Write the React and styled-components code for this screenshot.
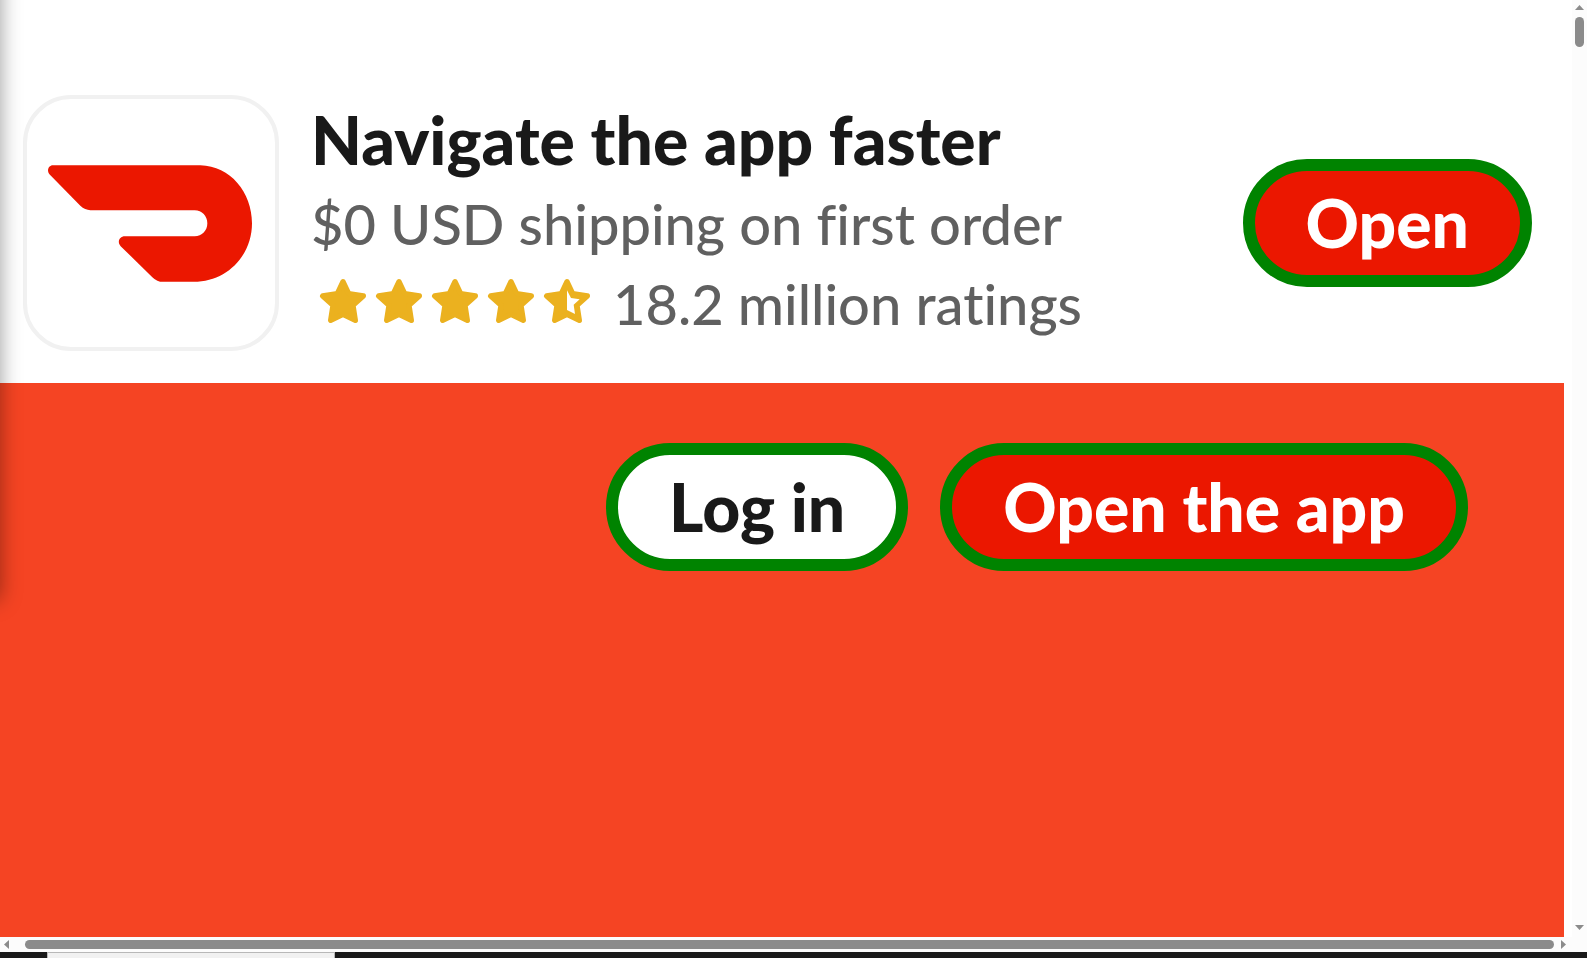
import React from "react";
import styled, { createGlobalStyle } from "styled-components";

const GlobalStyle = createGlobalStyle`
  * { box-sizing: border-box; }
  body {
    margin: 0;
    background: #ffffff;
    font-family: Lato, "Liberation Sans", sans-serif;
    font-variant-ligatures: none;
    overflow: hidden;
  }
`;

const Window = styled.div`
  position: relative;
  display: flex;
  flex-direction: column;
  height: 100vh;
  overflow: hidden;
`;

const Viewport = styled.div`
  flex: 1;
  display: flex;
  min-height: 0;
`;

const Page = styled.div`
  flex: 1;
  display: flex;
  flex-direction: column;
  padding-right: 8px;
  min-width: 0;
`;

const Banner = styled.header`
  display: flex;
  align-items: center;
  gap: 32px;
  padding: 95px 32px 32px 23px;
`;

const AppIcon = styled.div`
  flex: none;
  display: grid;
  place-items: center;
  width: 256px;
  height: 256px;
  padding-right: 2px;
  border: 4px solid #f1f1f1;
  border-radius: 48px;
`;

const BannerText = styled.div`
  flex: 1;
  min-width: 0;
  white-space: nowrap;
`;

const Title = styled.h1`
  margin: 0 0 6px;
  font-size: 66px;
  font-weight: 900;
  line-height: 76px;
  color: #191919;
`;

const Detail = styled.p`
  display: flex;
  align-items: center;
  gap: 18px;
  margin: 0;
  font-size: 56px;
  font-weight: 500;
  line-height: 80px;
  color: #606060;
`;

const Stars = styled.span`
  display: flex;
  padding: 0 0 6px 4px;
`;

const PillButton = styled.button`
  flex: none;
  height: 128px;
  padding: 0 51px;
  border: 12px solid #008300;
  border-radius: 64px;
  background: ${(p) => (p.$light ? "#ffffff" : "#eb1700")};
  color: ${(p) => (p.$light ? "#191919" : "#ffffff")};
  font: inherit;
  font-size: 66px;
  font-weight: 900;
  line-height: 80px;
  white-space: nowrap;
  cursor: pointer;
`;

const Hero = styled.main`
  flex: 1;
  display: flex;
  justify-content: flex-end;
  align-items: flex-start;
  gap: 32px;
  padding: 60px 96px 0;
  background: #f54423;
`;

const DrawerShadow = styled.div`
  position: absolute;
  top: -40px;
  left: -100px;
  width: 100px;
  height: 640px;
  box-shadow: 0 0 20px rgba(0, 0, 0, 0.4);
`;

const ScrollBar = styled.div`
  flex: none;
  display: flex;
  align-items: center;
  flex-direction: ${(p) => (p.$vertical ? "column" : "row")};
  width: ${(p) => (p.$vertical ? "15px" : "auto")};
  height: ${(p) => (p.$vertical ? "auto" : "15px")};
  padding: ${(p) => (p.$vertical ? "5px 0 7px" : "0 21px 0 4px")};
  background: #fcfcfc;
`;

const Track = styled.div`
  flex: 1;
  padding: ${(p) => (p.$vertical ? "7px 0" : "0 7px 0 16px")};
`;

const Thumb = styled.div`
  width: ${(p) => (p.$vertical ? "9px" : "100%")};
  height: ${(p) => (p.$vertical ? "30px" : "9px")};
  border-radius: 5px;
  background: #8b8b8b;
`;

const Footer = styled.footer`
  flex: none;
  height: 6px;
  padding-left: 47px;
  background: #191919;
`;

const FooterTab = styled.div`
  width: 288px;
  height: 100%;
  border: 1px solid #b8b8b8;
  border-bottom: 0;
  background: #f1f1f1;
`;

const arrows = {
  up: ["0,5 9,5 4.5,0", 9, 5],
  down: ["0,0 9,0 4.5,5", 9, 5],
  left: ["5,0 5,9 0,4.5", 5, 9],
  right: ["0,0 0,9 5,4.5", 5, 9],
};

function Arrow({ to }) {
  const [points, w, h] = arrows[to];
  return (
    <svg width={w} height={h} viewBox={`0 0 ${w} ${h}`} aria-hidden="true">
      <polygon points={points} fill="#8b8b8b" />
    </svg>
  );
}

function Star({ half }) {
  return (
    <svg width="56" height="56" viewBox="0 0 168 168" aria-hidden="true">
      <path
        d="M84 26 101 62 145 69 114 97 121 142 84 124 47 142 54 97 23 69 67 62Z"
        fill="#ebb11f"
        stroke="#ebb11f"
        strokeWidth="16"
        strokeLinejoin="round"
      />
      {half && <path d="M84 52 96 75 122 79 104 95 108 123 84 111Z" fill="#fff" />}
    </svg>
  );
}

function Logo() {
  return (
    <svg width="204" height="117" viewBox="143 254 612 350" role="img" aria-label="DoorDash">
      <path
        fill="#eb1700"
        d="M158 254H600C690 256 755 335 755 428C755 525 680 604 580 604H488Q470 604 456 590L361 497C350 486 356 467 374 467H583C605 467 621 450 621 428C621 406 605 389 583 389H270Q254 389 240 376L148 282C138 271 144 254 158 254Z"
      />
    </svg>
  );
}

export default function App() {
  return (
    <Window>
      <GlobalStyle />
      <Viewport>
        <Page>
          <Banner>
            <AppIcon>
              <Logo />
            </AppIcon>
            <BannerText>
              <Title>Navigate the app faster</Title>
              <Detail>$0 USD shipping on first order</Detail>
              <Detail>
                <Stars role="img" aria-label="4.5 out of 5 stars">
                  <Star />
                  <Star />
                  <Star />
                  <Star />
                  <Star half />
                </Stars>
                18.2 million ratings
              </Detail>
            </BannerText>
            <PillButton type="button">Open</PillButton>
          </Banner>
          <Hero>
            <PillButton type="button" $light>Log in</PillButton>
            <PillButton type="button">Open the app</PillButton>
          </Hero>
        </Page>
        <ScrollBar $vertical>
          <Arrow to="up" />
          <Track $vertical>
            <Thumb $vertical />
          </Track>
          <Arrow to="down" />
        </ScrollBar>
      </Viewport>
      <ScrollBar>
        <Arrow to="left" />
        <Track>
          <Thumb />
        </Track>
        <Arrow to="right" />
      </ScrollBar>
      <Footer>
        <FooterTab />
      </Footer>
      <DrawerShadow />
    </Window>
  );
}
